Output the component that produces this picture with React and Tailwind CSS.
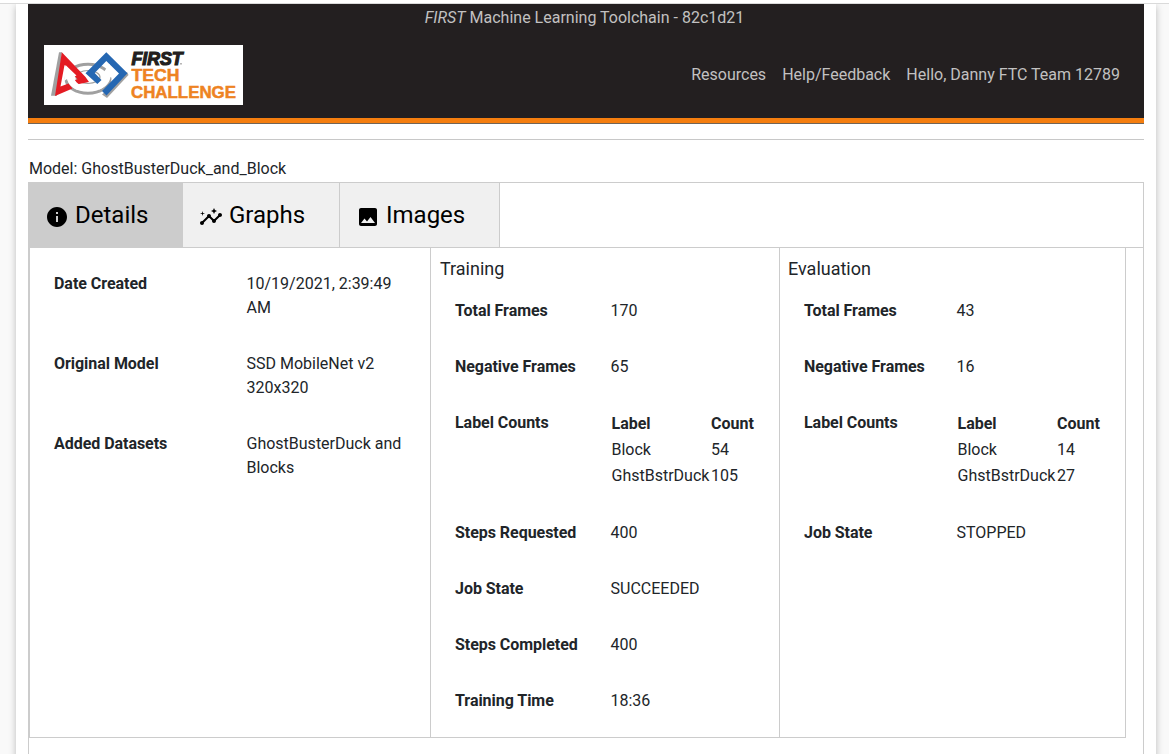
import React from "react";
import { MdInfo, MdInsights, MdImage } from "react-icons/md";

function Logo() {
  return (
    <svg width="199" height="60" viewBox="0 0 199 60" className="block bg-white">
      <ellipse cx="44" cy="33.700" rx="22" ry="14.500" fill="#fff" stroke="#a0a0a0" strokeWidth="3" />
      <ellipse cx="44" cy="32" rx="12" ry="6.500" fill="#fff" stroke="#a0a0a0" strokeWidth="1.200" />
      <path d="M15 7.300h3L13 50.700H7z" fill="#a0a0a0" />
      <path d="M58 49.500l5 3.500L84.500 30 83 27z" fill="#a0a0a0" />
      <path d="M17.800 7.300L41.500 32l3.500 5-12.500 2.500-2-4.500 3-.7L20.500 20l-4 21.500 8-3 4 5L11 51z" fill="#e41b23" />
      <path d="M21.500 20l11 10.500-3 1.500c1 4 4 7 9 9.500l-5 3.500c-5-2-9-6-10.500-11l-3 2z" fill="#fff" />
      <path d="M62.300 7.300L83.500 28.300 62.500 50.500l-4.500-4.500L75 28.500 62.300 16 50.700 28l6.800 7-4.200 4L41.500 28.300z" fill="#2567b2" />
      <path d="M65.500 19l4 14-3-1c-1 6-5 10-11 12.500l-6-3c6-2 10-5.500 11-11l-3.500.5z" fill="#fff" />
      <text x="87.500" y="19.500" fontFamily="Liberation Sans, sans-serif" fontWeight="700" fontStyle="italic" fontSize="18" textLength="51" lengthAdjust="spacingAndGlyphs" fill="#231f20" stroke="#231f20" strokeWidth="1.200">FIRST</text>
      <circle cx="137" cy="18.800" r="0.600" fill="#231f20" />
      <text x="87.500" y="36" fontFamily="Liberation Sans, sans-serif" fontWeight="700" fontSize="16.500" textLength="48" lengthAdjust="spacingAndGlyphs" fill="#ee8322" stroke="#ee8322" strokeWidth="0.500">TECH</text>
      <text x="87" y="52.700" fontFamily="Liberation Sans, sans-serif" fontWeight="700" fontSize="16.500" textLength="105" lengthAdjust="spacingAndGlyphs" fill="#ee8322" stroke="#ee8322" strokeWidth="0.500">CHALLENGE</text>
    </svg>
  );
}

function Row({ label, labelWidth, children }) {
  return (
    <div className="mb-8 flex leading-6">
      <div className={`${labelWidth} shrink-0 font-bold tracking-[-0.04px]`}>{label}</div>
      <div className="min-w-0 flex-1">{children}</div>
    </div>
  );
}

function Counts({ rows }) {
  return (
    <div className="grid h-[78px] grid-cols-[99.5px_1fr] content-start gap-y-0.5 pt-px pl-px whitespace-nowrap">
      <b className="font-bold">Label</b>
      <b className="font-bold">Count</b>
      {rows.map(([name, count]) => (
        <React.Fragment key={name}>
          <span>{name}</span>
          <span>{count}</span>
        </React.Fragment>
      ))}
    </div>
  );
}

export default function App() {
  return (
    <div className="flex h-[754px] flex-col overflow-hidden bg-[#f9f9f9] font-['Roboto',sans-serif] text-base text-[#212529]">
      <div className="h-1 shrink-0 border-b border-[#dadada] bg-white" />
      <div className="flex-1 overflow-hidden">
        <div className="ml-4 flex h-[780px] w-[1140px] flex-col bg-white px-3 shadow-[0_2px_7px_rgba(0,0,0,0.25)]">
          <header className="h-[120px] shrink-0 border-b border-[#716558] bg-[#231f20] text-[#c2c1c1]">
            <div className="flex h-[114px] flex-col">
              <div className="h-[41px] pt-0.5 pr-[19px] pl-4 text-center leading-6">
                <em>FIRST</em> Machine Learning Toolchain - 82c1d21
              </div>
              <div className="flex h-[60px] items-center justify-between pr-6 pl-4">
                <Logo />
                <nav className="flex gap-4">
                  <span>Resources</span>
                  <span>Help/Feedback</span>
                  <span>Hello, Danny FTC Team 12789</span>
                </nav>
              </div>
            </div>
            <div className="h-[5px] bg-[#f57e0f]" />
          </header>
          <div className="mt-[15px] h-px shrink-0 bg-[#c8c8c8]" />
          <div className="mt-[17px] h-[25px] shrink-0 pl-px leading-6">Model: GhostBusterDuck_and_Block</div>
          <div className="flex h-[66px] shrink-0 border border-[#ccc] text-2xl text-black">
            <div className="flex w-[154px] items-center bg-[#ccc] pl-4">
              <MdInfo size={24} className="mt-1" />
              <span className="ml-1.5">Details</span>
            </div>
            <div className="flex w-[157px] items-center border-r border-[#ccc] bg-[#f0f0f0] pl-4">
              <MdInsights size={24} className="mt-1" />
              <span className="ml-1.5">Graphs</span>
            </div>
            <div className="flex w-[160px] items-center border-r border-[#ccc] bg-[#f0f0f0] pl-4">
              <MdImage size={24} className="mt-1" />
              <span className="ml-1.5">Images</span>
            </div>
          </div>
          <div className="flex-1 border-x border-[#ccc]">
            <div className="flex h-[490px] w-[1097px] border-r border-b border-l border-[#ccc]">
              <section className="w-[401px] border-r border-[#ccc] pt-6 pr-4 pl-6">
                <Row label="Date Created" labelWidth="w-[192.5px]">10/19/2021, 2:39:49<br />AM</Row>
                <Row label="Original Model" labelWidth="w-[192.5px]">SSD MobileNet v2<br />320x320</Row>
                <Row label="Added Datasets" labelWidth="w-[192.5px]">GhostBusterDuck and<br />Blocks</Row>
              </section>
              <section className="w-[349px] border-r border-[#ccc] pt-[7px] pl-[9px]">
                <h2 className="mb-[17px] text-lg leading-[27px]">Training</h2>
                <div className="pl-[15px]">
                  <Row label="Total Frames" labelWidth="w-[155.5px]">170</Row>
                  <Row label="Negative Frames" labelWidth="w-[155.5px]">65</Row>
                  <Row label="Label Counts" labelWidth="w-[155.5px]">
                    <Counts rows={[["Block", "54"], ["GhstBstrDuck", "105"]]} />
                  </Row>
                  <Row label="Steps Requested" labelWidth="w-[155.5px]">400</Row>
                  <Row label="Job State" labelWidth="w-[155.5px]">SUCCEEDED</Row>
                  <Row label="Steps Completed" labelWidth="w-[155.5px]">400</Row>
                  <Row label="Training Time" labelWidth="w-[155.5px]">18:36</Row>
                </div>
              </section>
              <section className="flex-1 pt-[7px] pl-2">
                <h2 className="mb-[17px] text-lg leading-[27px]">Evaluation</h2>
                <div className="pl-4">
                  <Row label="Total Frames" labelWidth="w-[152.5px]">43</Row>
                  <Row label="Negative Frames" labelWidth="w-[152.5px]">16</Row>
                  <Row label="Label Counts" labelWidth="w-[152.5px]">
                    <Counts rows={[["Block", "14"], ["GhstBstrDuck", "27"]]} />
                  </Row>
                  <Row label="Job State" labelWidth="w-[152.5px]">STOPPED</Row>
                </div>
              </section>
            </div>
          </div>
        </div>
      </div>
    </div>
  );
}
